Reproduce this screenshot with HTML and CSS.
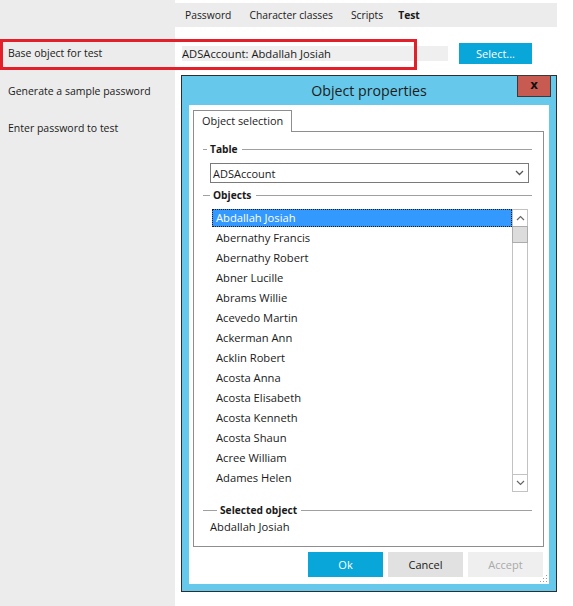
FILE: index.html
```html
<!DOCTYPE html>
<html>
<head>
<meta charset="utf-8">
<link rel="stylesheet" href="styles.css">
</head>
<body>
<div class="app">
  <aside class="sidebar">
    <div class="side-item">Base object for test</div>
    <div class="side-item">Generate a sample password</div>
    <div class="side-item">Enter password to test</div>
  </aside>
  <main class="main">
    <nav class="tabs">
      <span class="tab">Password</span>
      <span class="tab">Character classes</span>
      <span class="tab">Scripts</span>
      <span class="tab active">Test</span>
    </nav>
    <div class="base-row">
      <div class="field">ADSAccount: Abdallah Josiah</div>
      <button class="btn btn-primary btn-select">Select...</button>
    </div>
    <section class="dialog">
      <header class="titlebar">Object properties</header>
      <button class="close">x</button>
      <div class="panel">
        <div class="tabhead">Object selection</div>
        <div class="tabbody">
          <div class="legend legend-table"><span class="leg-line short"></span><span class="leg-text">Table</span><span class="leg-line long"></span></div>
          <div class="select">
            <span>ADSAccount</span>
            <svg class="chev" width="9" height="6" viewBox="0 0 9 6"><polyline points="1,1 4.5,4.5 8,1" fill="none" stroke="#555" stroke-width="1.3"/></svg>
          </div>
          <div class="legend legend-objects"><span class="leg-line short"></span><span class="leg-text">Objects</span><span class="leg-line long"></span></div>
          <div class="listbox">
            <ul class="items">
              <li class="item selected">Abdallah Josiah</li>
              <li class="item">Abernathy Francis</li>
              <li class="item">Abernathy Robert</li>
              <li class="item">Abner Lucille</li>
              <li class="item">Abrams Willie</li>
              <li class="item">Acevedo Martin</li>
              <li class="item">Ackerman Ann</li>
              <li class="item">Acklin Robert</li>
              <li class="item">Acosta Anna</li>
              <li class="item">Acosta Elisabeth</li>
              <li class="item">Acosta Kenneth</li>
              <li class="item">Acosta Shaun</li>
              <li class="item">Acree William</li>
              <li class="item">Adames Helen</li>
            </ul>
            <div class="scrollbar">
              <div class="sb-btn"><svg width="9" height="6" viewBox="0 0 9 6"><polyline points="1,5 4.5,1.5 8,5" fill="none" stroke="#666" stroke-width="1.2"/></svg></div>
              <div class="sb-thumb"></div>
              <div class="sb-track"></div>
              <div class="sb-btn"><svg width="9" height="6" viewBox="0 0 9 6"><polyline points="1,1 4.5,4.5 8,1" fill="none" stroke="#666" stroke-width="1.2"/></svg></div>
            </div>
          </div>
          <div class="legend legend-selected"><span class="leg-line short"></span><span class="leg-text">Selected object</span><span class="leg-line long"></span></div>
          <div class="selected-value">Abdallah Josiah</div>
        </div>
        <div class="actions">
          <button class="btn btn-primary">Ok</button>
          <button class="btn btn-cancel">Cancel</button>
          <button class="btn btn-disabled">Accept</button>
        </div>
        <svg class="grip" width="8" height="8" viewBox="0 0 8 8">
          <rect x="6" y="0" width="1" height="1" fill="#9a9a9a"/>
          <rect x="3" y="3" width="1" height="1" fill="#9a9a9a"/>
          <rect x="6" y="3" width="1" height="1" fill="#9a9a9a"/>
          <rect x="0" y="6" width="1" height="1" fill="#9a9a9a"/>
          <rect x="3" y="6" width="1" height="1" fill="#9a9a9a"/>
          <rect x="6" y="6" width="1" height="1" fill="#9a9a9a"/>
        </svg>
      </div>
    </section>
  </main>
  <div class="highlight"></div>
</div>
</body>
</html>
```
FILE: styles.css
```css
* { box-sizing: border-box; }
html, body {
  margin: 0;
  padding: 0;
  background: #ffffff;
}
body {
  font-family: "Open Sans", "Noto Sans", "Liberation Sans", sans-serif;
  font-size: 10.5px;
  color: #1a1a1a;
  width: 573px;
  height: 606px;
  overflow: hidden;
}
.app {
  position: relative;
  display: flex;
  width: 573px;
  height: 606px;
}
.sidebar {
  width: 175px;
  flex: none;
  background: #ececec;
  padding: 45px 0 0 8px;
}
.side-item {
  line-height: 16px;
  height: 16px;
  margin-bottom: 21.5px;
  white-space: nowrap;
}
.main {
  flex: 1;
  display: flex;
  flex-direction: column;
}
.tabs {
  margin-top: 3px;
  width: 382px;
  height: 24px;
  background: #ececec;
  display: flex;
  align-items: center;
  padding-left: 1px;
  font-size: 10.3px;
}
.tab {
  padding: 0 9px;
  white-space: nowrap;
}
.tab.active {
  font-weight: 700;
  padding-left: 6px;
}
.base-row {
  margin-top: 16px;
  height: 21px;
  display: flex;
  align-items: center;
}
.field {
  margin-left: 7px;
  width: 266px;
  height: 15px;
  line-height: 15px;
  background: #efefef;
  white-space: nowrap;
  font-size: 11.2px;
}
.btn {
  font-family: inherit;
  font-size: 11px;
  border: none;
  padding: 0;
  margin: 0;
  width: 75px;
  height: 25px;
  color: #1a1a1a;
  cursor: default;
}
.btn-primary {
  background: #09a6d9;
  color: #ffffff;
}
.btn-select {
  margin-left: 11px;
  width: 73px;
  height: 21px;
}
.btn-cancel { background: #e1e1e1; }
.btn-disabled { background: #efefef; color: #a9a9a9; }

.dialog {
  position: relative;
  margin-top: 11px;
  margin-left: 6px;
  width: 376px;
  height: 517px;
  border: 1px solid #2e2e2e;
  background: #66c8ea;
  display: flex;
  flex-direction: column;
}
.titlebar {
  height: 29px;
  line-height: 29px;
  text-align: center;
  font-size: 14.2px;
  color: #1c1c1c;
}
.close {
  position: absolute;
  top: -1px;
  right: 5px;
  width: 34px;
  height: 22px;
  background: #c75b51;
  border: 1px solid #3a3a3a;
  font-family: "DejaVu Sans", sans-serif;
  font-weight: 700;
  font-size: 12px;
  line-height: 16px;
  color: #111;
  padding: 0 0 3px 0;
}
.panel {
  position: relative;
  margin: 0 7px 7px 7px;
  flex: 1;
  background: #ffffff;
  padding: 5px 5px 0 4px;
  display: flex;
  flex-direction: column;
}
.tabhead {
  position: relative;
  z-index: 1;
  align-self: flex-start;
  width: 99px;
  height: 22px;
  margin-bottom: -1px;
  border: 1px solid #8e8e8e;
  border-bottom: none;
  background: #fff;
  padding-left: 8px;
  line-height: 20px;
  white-space: nowrap;
  font-size: 10.9px;
}
.tabbody {
  height: 416px;
  border: 1px solid #8e8e8e;
  display: flex;
  flex-direction: column;
}
.legend {
  display: flex;
  align-items: center;
  height: 16px;
  padding-left: 9px;
  padding-right: 11px;
}
.leg-line {
  height: 1px;
  background: #a0a0a0;
}
.leg-line.long { flex: 1; }
.leg-text {
  font-weight: 700;
  font-size: 10.2px;
  padding: 0 4px 0 3px;
  white-space: nowrap;
}
.legend-table { margin-top: 9px; }
.legend-table .leg-line.short { width: 4px; }
.legend-objects { margin-top: 4px; }
.legend-objects .leg-line.short { width: 7px; }
.legend-objects .leg-text { padding-right: 5px; }
.legend-selected { margin-top: 10px; }
.legend-selected .leg-line.short { width: 14px; }
.select {
  margin: 6px 14px 0 16px;
  height: 20px;
  border: 1px solid #7a7a7a;
  display: flex;
  align-items: center;
  justify-content: space-between;
  padding: 0 4px 0 2px;
  font-size: 11px;
}
.listbox {
  margin: 6px 15px 0 18px;
  height: 283px;
  display: flex;
}
.items {
  list-style: none;
  margin: 0;
  padding: 0;
  flex: 1;
}
.item {
  height: 18px;
  line-height: 18px;
  margin-bottom: 2px;
  padding-left: 4px;
  font-size: 11.2px;
  white-space: nowrap;
}
.item.selected {
  background: #3399ff;
  color: #ffffff;
  outline: 1px dotted #1a1a1a;
  outline-offset: -1px;
}
.scrollbar {
  width: 16px;
  border: 1px solid #c2c2c2;
  display: flex;
  flex-direction: column;
}
.sb-btn {
  height: 16px;
  display: flex;
  align-items: center;
  justify-content: center;
}
.sb-thumb {
  height: 17px;
  background: #dcdcdc;
  border: 1px solid #acacac;
  margin: 0 -1px;
}
.sb-track {
  flex: 1;
  border-bottom: 1px solid #c2c2c2;
}
.selected-value {
  margin: 1px 0 0 16px;
  line-height: 16px;
  font-size: 11.2px;
}
.actions {
  margin-top: 5px;
  display: flex;
  justify-content: flex-end;
  gap: 5px;
  padding-right: 1px;
}
.grip {
  position: absolute;
  right: 1px;
  bottom: 1px;
}
.highlight {
  position: absolute;
  left: 0;
  top: 39px;
  width: 417px;
  height: 31px;
  border: 3px solid #e3202a;
  pointer-events: none;
}
```
